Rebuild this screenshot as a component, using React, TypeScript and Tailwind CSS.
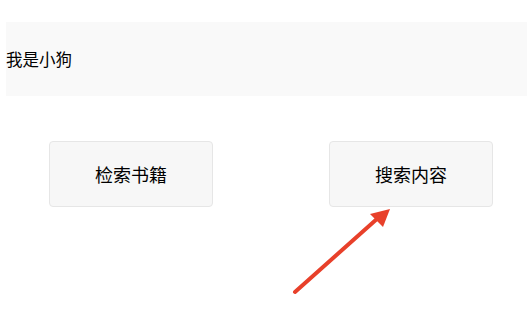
const font = { fontFamily: '"Noto Sans CJK SC", "Noto Sans", sans-serif' }

function Arrow() {
  return (
    <svg className="absolute left-0 top-0 pointer-events-none" width="527" height="321" viewBox="0 0 527 321">
      <line x1="295" y1="292" x2="378" y2="218" stroke="#e8402a" strokeWidth="4" strokeLinecap="round" />
      <polygon points="390,209 370,214 383,227" fill="#e8402a" />
    </svg>
  )
}

export default function App() {
  return (
    <div className="relative w-[527px] h-[321px] bg-white overflow-hidden text-black" style={font}>
      <div className="pt-[22px] pl-[6px]">
        <div className="h-[74px] flex items-center bg-[#f9f9f9] text-[16.5px]">我是小狗</div>
      </div>
      <div className="flex mt-[45px] ml-[49px] gap-[116px]">
        {["检索书籍", "搜索内容"].map((t) => (
          <button
            key={t}
            className="w-[164px] h-[66px] flex items-center justify-center bg-[#f7f7f7] border border-[#e6e6e6] rounded-[4px] text-[18px]"
          >
            {t}
          </button>
        ))}
      </div>
      <Arrow />
    </div>
  )
}
